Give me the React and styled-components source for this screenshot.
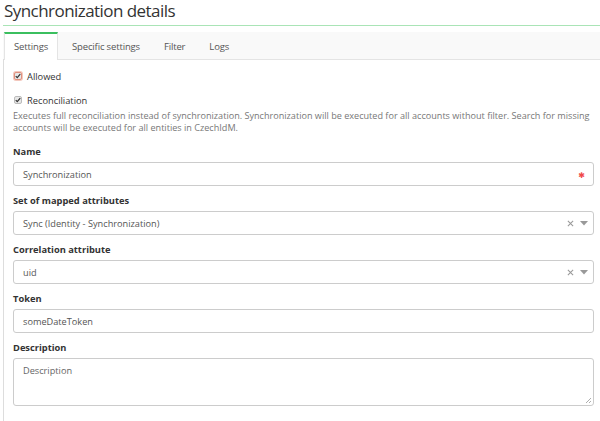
import React from "react";
import styled, { createGlobalStyle } from "styled-components";

const Global = createGlobalStyle`
  html, body { margin: 0; padding: 0; background: #fff; }
  body { font-family: "Open Sans", "DejaVu Sans", sans-serif; color: #333; }
  * { box-sizing: border-box; }
`;

const Page = styled.div`
  padding-left: 3px;
  width: 600px;
  height: 421px;
  overflow: hidden;
`;

const Title = styled.h1`
  margin: 0;
  height: 26px;
  font-size: 17px;
  font-weight: 400;
  letter-spacing: -0.55px;
  line-height: 22px;
  color: #333;
  padding-left: 1px;
  border-bottom: 1px solid #a9e4b6;
`;

const TabBar = styled.div`
  margin-top: 6px;
  display: flex;
  height: 28px;
  background: #f9f9f9;
  border-bottom: 1px solid #e4e4e4;
  padding-left: 1px;
`;

const Tab = styled.div`
  height: 28px;
  padding: 0 9px;
  margin-right: 4px;
  font-size: 9.5px;
  letter-spacing: -0.15px;
  line-height: 25px;
  color: #555;
  background: ${(p) => (p.$active ? "#fff" : "transparent")};
  border-top: 2px solid ${(p) => (p.$active ? "#3bbf5f" : "transparent")};
  border-left: 1px solid ${(p) => (p.$active ? "#e4e4e4" : "transparent")};
  border-right: 1px solid ${(p) => (p.$active ? "#e4e4e4" : "transparent")};
  white-space: nowrap;
`;

const Body = styled.div`
  border-left: 1px solid #ddd;
  margin-top: -1px;
  padding: 10px 6px 20px 9px;
  height: 400px;
`;

const CheckRow = styled.label`
  display: flex;
  align-items: center;
  gap: 5px;
  font-size: 9.3px;
  color: #333;
  height: 14px;
  margin-top: ${(p) => p.$mt || 0}px;
`;

const Box = styled.span`
  width: 8px;
  height: 8px;
  border-radius: 2px;
  background: #e8e8e8;
  border: 1px solid ${(p) => (p.$focus ? "#e0907e" : "#bbb")};
  box-shadow: ${(p) => (p.$focus ? "0 0 0 1px #f3c8be" : "none")};
  display: flex;
  align-items: center;
  justify-content: center;
  margin-left: 1px;
`;

const Help = styled.p`
  margin: 3px 0 0;
  font-size: 9.1px;
  line-height: 12px;
  color: #777;
`;

const Label = styled.div`
  font-size: 9.3px;
  font-weight: 700;
  color: #333;
  margin-top: ${(p) => p.$mt || 9}px;
  line-height: 12px;
  margin-bottom: 4px;
`;

const Field = styled.div`
  position: relative;
  display: flex;
  height: ${(p) => p.$h || 24}px;
  border: 1px solid #ccc;
  border-radius: 3px;
  padding: 0 5px 0 9px;
  font-size: 9.2px;
  color: #555;
  align-items: ${(p) => (p.$area ? "flex-start" : "center")};
  padding-top: ${(p) => (p.$area ? "5px" : "0")};
`;

const Value = styled.span`
  flex: 1;
  color: ${(p) => (p.$placeholder ? "#666" : "#555")};
`;

const Star = styled.span`
  color: #f04a4a;
  font-size: 8px;
  margin-right: 3px;
`;

const Controls = styled.span`
  display: flex;
  align-items: center;
  gap: 6px;
`;

const Grip = styled.svg`
  position: absolute;
  right: 1px;
  bottom: 1px;
`;

const Check = () => (
  <svg width="6" height="6" viewBox="0 0 8 8">
    <path d="M1 4.2 L3 6.2 L7 1.5" stroke="#333" strokeWidth="1.7" fill="none" />
  </svg>
);

const SelectControls = () => (
  <Controls>
    <svg width="7" height="7" viewBox="0 0 8 8">
      <path d="M1 1 L7 7 M7 1 L1 7" stroke="#999" strokeWidth="1.2" />
    </svg>
    <svg width="8" height="5" viewBox="0 0 8 5">
      <path d="M0 0 L8 0 L4 4.5 Z" fill="#999" />
    </svg>
  </Controls>
);

export default function App() {
  return (
    <>
      <Global />
      <Page>
        <Title>Synchronization details</Title>
        <TabBar>
          <Tab $active>Settings</Tab>
          <Tab>Specific settings</Tab>
          <Tab>Filter</Tab>
          <Tab>Logs</Tab>
        </TabBar>
        <Body>
          <CheckRow>
            <Box $focus>
              <Check />
            </Box>
            Allowed
          </CheckRow>
          <CheckRow $mt={10}>
            <Box>
              <Check />
            </Box>
            Reconciliation
          </CheckRow>
          <Help>
            Executes full reconciliation instead of synchronization. Synchronization will be executed for all
            accounts without filter. Search for missing accounts will be executed for all entities in CzechIdM.
          </Help>
          <Label $mt={12}>Name</Label>
          <Field>
            <Value>Synchronization</Value>
            <Star>✱</Star>
          </Field>
          <Label>Set of mapped attributes</Label>
          <Field>
            <Value>Sync (Identity - Synchronization)</Value>
            <SelectControls />
          </Field>
          <Label>Correlation attribute</Label>
          <Field>
            <Value>uid</Value>
            <SelectControls />
          </Field>
          <Label>Token</Label>
          <Field>
            <Value>someDateToken</Value>
          </Field>
          <Label>Description</Label>
          <Field $h={48} $area>
            <Value $placeholder>Description</Value>
            <Grip width="7" height="7" viewBox="0 0 7 7">
              <path d="M6 1 L1 6 M6 4 L4 6" stroke="#999" strokeWidth="0.8" />
            </Grip>
          </Field>
        </Body>
      </Page>
    </>
  );
}
